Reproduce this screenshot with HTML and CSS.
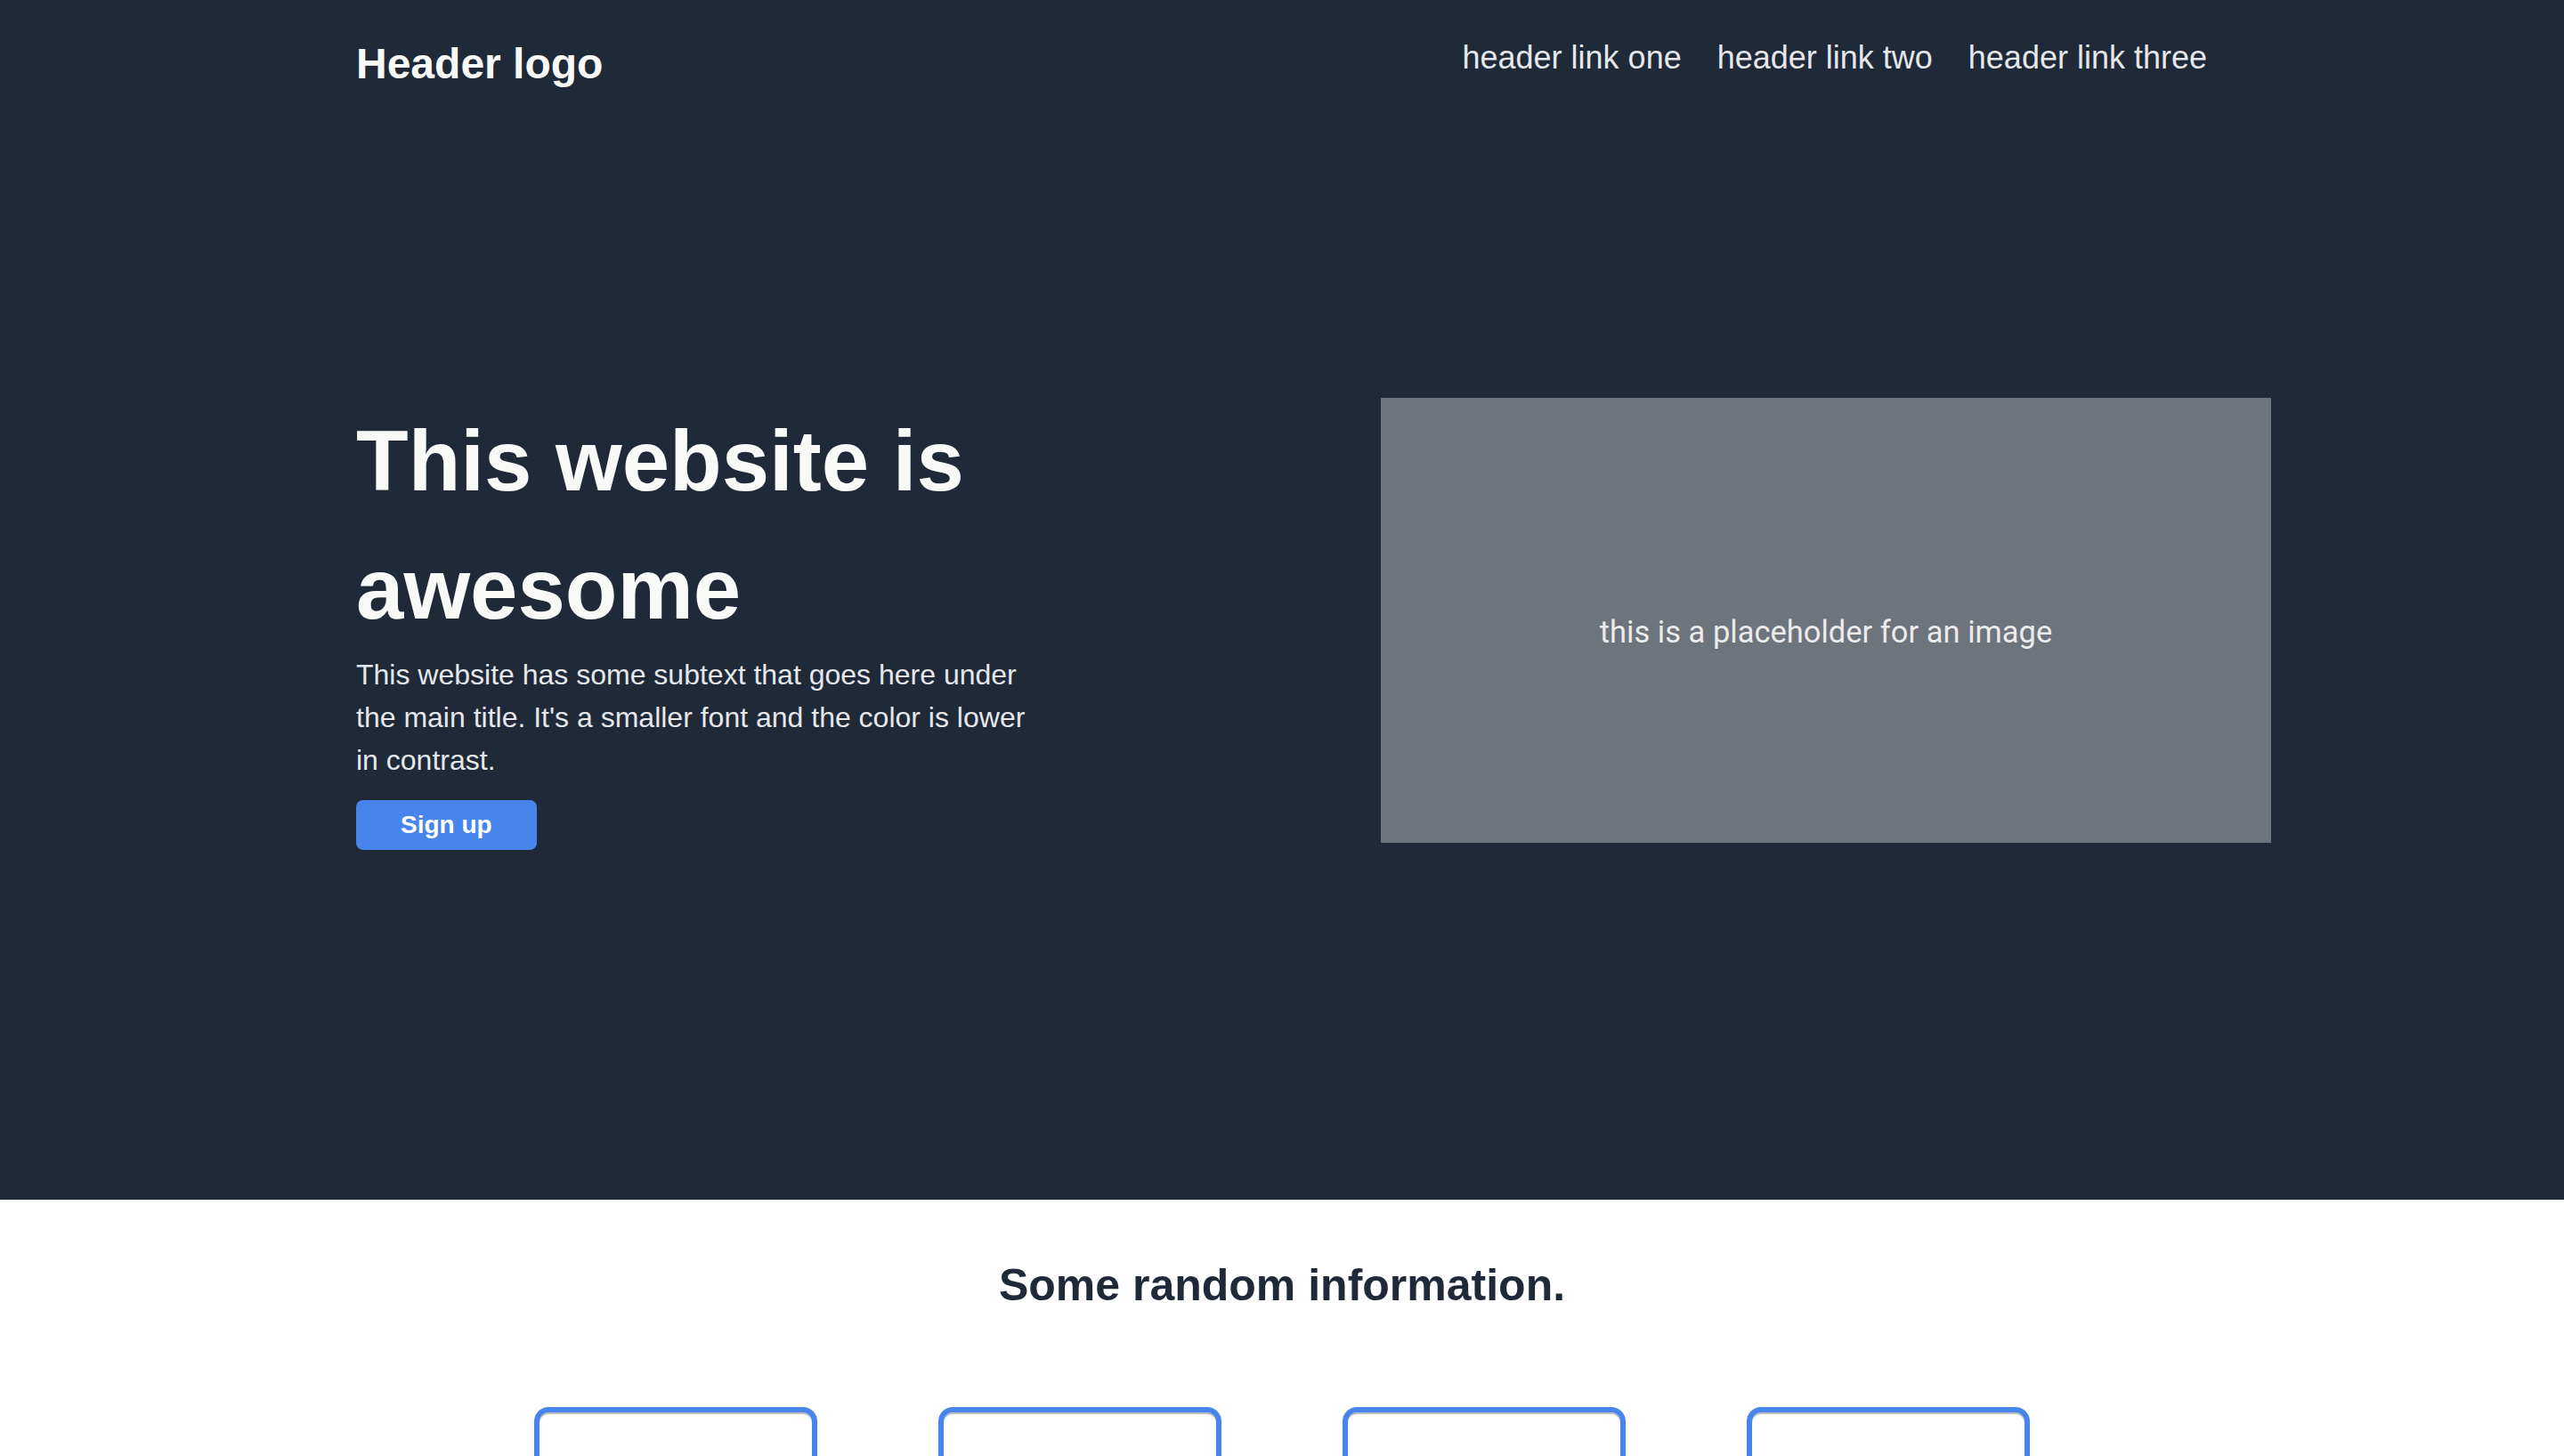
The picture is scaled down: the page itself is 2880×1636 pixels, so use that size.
FILE: index.html
```html
<!DOCTYPE html>
<html lang="en">
<head>
<meta charset="utf-8">
<title>Landing page</title>
<link rel="stylesheet" href="styles.css">
</head>
<body>
  <div class="top">
    <header class="header">
      <div class="logo">Header logo</div>
      <nav class="nav">
        <a href="#">header link one</a>
        <a href="#">header link two</a>
        <a href="#">header link three</a>
      </nav>
    </header>
    <section class="hero">
      <div class="hero-text">
        <h1 class="hero-title">This website is awesome</h1>
        <p class="hero-sub">This website has some subtext that goes here under the main title. It's a smaller font and the color is lower in contrast.</p>
        <button class="btn">Sign up</button>
      </div>
      <div class="hero-image"><span>this is a placeholder for an image</span></div>
    </section>
  </div>
  <section class="info">
    <h2 class="info-title">Some random information.</h2>
    <div class="cards">
      <div class="card"></div>
      <div class="card"></div>
      <div class="card"></div>
      <div class="card"></div>
    </div>
  </section>
</body>
</html>
```

FILE: styles.css
```css
* { box-sizing: border-box; }

body {
  margin: 0;
  font-family: "Liberation Sans", Arial, Helvetica, sans-serif;
  background: #ffffff;
}

.top {
  background: #1f2937;
  height: 1348px;
}

.header {
  display: flex;
  justify-content: space-between;
  align-items: flex-start;
  padding: 44px 401px 0 400px;
}

.logo {
  color: #f9faf8;
  font-size: 48px;
  font-weight: 700;
  line-height: normal;
}

.nav {
  display: flex;
  gap: 40px;
}

.nav a {
  color: #e5e7eb;
  font-size: 36px;
  line-height: normal;
  text-decoration: none;
}

.hero {
  display: flex;
  justify-content: space-between;
  align-items: flex-start;
  margin-top: 347px;
  padding: 0 329px 0 400px;
}

.hero-text {
  width: 764px;
  display: flex;
  flex-direction: column;
  align-items: flex-start;
}

.hero-title {
  margin: 0;
  color: #f9faf8;
  font-size: 96px;
  font-weight: 700;
  line-height: 1.5;
}

.hero-sub {
  margin: 0;
  color: #e5e7eb;
  font-size: 32px;
  line-height: 48px;
}

.btn {
  margin-top: 21px;
  height: 56px;
  padding: 0 50px;
  border: none;
  border-radius: 8px;
  background: #4785ed;
  color: #ffffff;
  font-family: "Liberation Sans", Arial, Helvetica, sans-serif;
  font-size: 28px;
  font-weight: 700;
}

.hero-image {
  margin-top: 1px;
  width: 1000px;
  height: 500px;
  background: #6e747c;
  display: flex;
  align-items: center;
  justify-content: center;
  padding-top: 26px;
}

.hero-image span {
  font-family: Roboto, "Liberation Sans", sans-serif;
  font-size: 34.5px;
  color: #ebebeb;
}

.info {
  padding-top: 67px;
  display: flex;
  flex-direction: column;
  align-items: center;
}

.info-title {
  margin: 0;
  color: #1f2937;
  font-size: 50px;
  font-weight: 700;
  line-height: normal;
}

.cards {
  display: flex;
  gap: 136px;
  margin-top: 108px;
}

.card {
  width: 318px;
  height: 318px;
  border: 6px solid #4785ed;
  border-radius: 16px;
  box-shadow: inset 0 2px 0 #bfbfbf;
}
```
